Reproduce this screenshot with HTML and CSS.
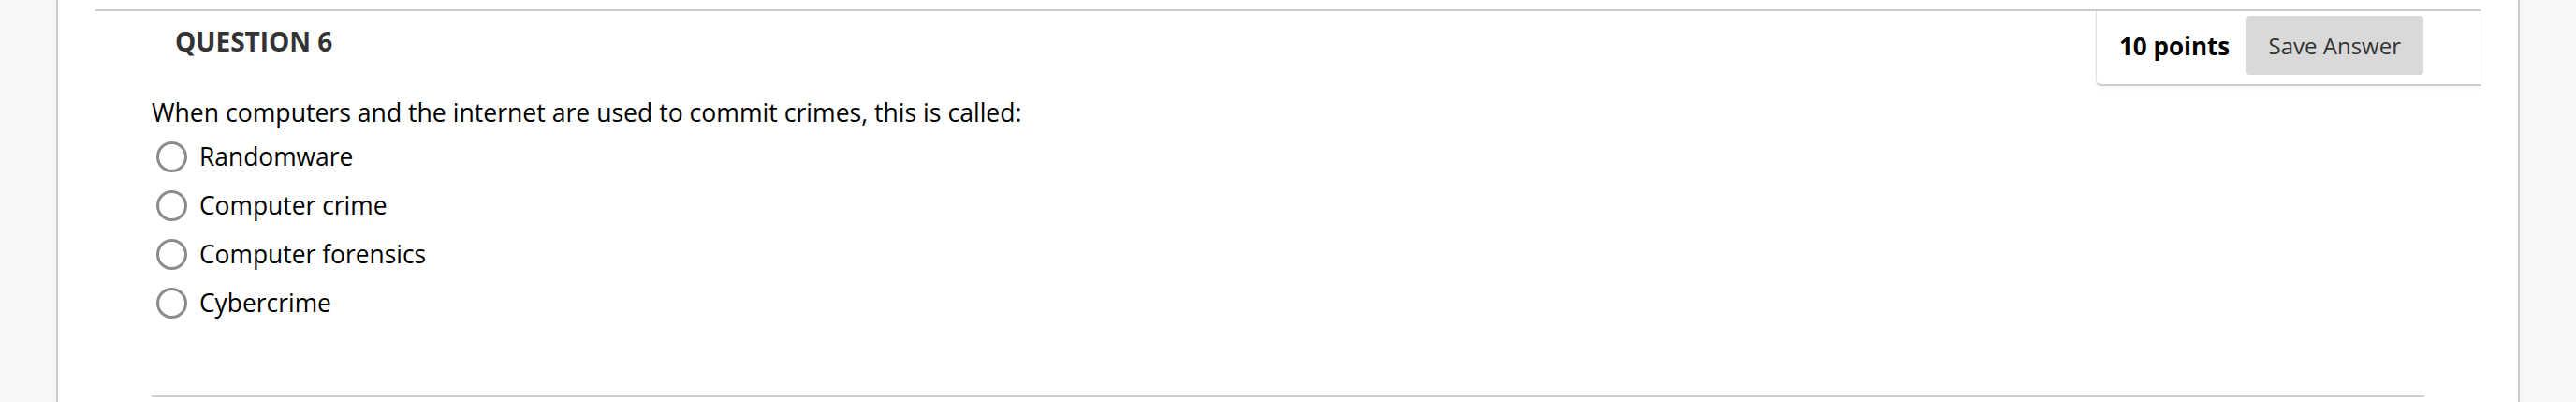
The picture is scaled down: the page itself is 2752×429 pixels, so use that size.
FILE: index.html
```html
<!DOCTYPE html>
<html lang="en">
<head>
  <meta charset="UTF-8">
  <title>Question 6</title>
  <link rel="stylesheet" href="styles.css">
</head>
<body>
  <div class="page">
    <div class="question">
      <div class="q-head">
        <h3 class="q-title">QUESTION 6</h3>
        <div class="points-box">
          <span class="points">10 points</span>
          <button class="save-btn" type="button">Save Answer</button>
        </div>
      </div>

      <div class="q-body">
        <p class="q-text">When computers and the internet are used to commit crimes, this is called:</p>
        <ul class="answers">
          <li class="answer"><span class="radio"></span><label>Randomware</label></li>
          <li class="answer"><span class="radio"></span><label>Computer crime</label></li>
          <li class="answer"><span class="radio"></span><label>Computer forensics</label></li>
          <li class="answer"><span class="radio"></span><label>Cybercrime</label></li>
        </ul>
      </div>
    </div>
  </div>
</body>
</html>
```

FILE: styles.css
```css
body {
  margin: 0;
  padding: 0;
  background-color: #f7f7f7;
  font-family: 'Open Sans', 'Noto Sans', sans-serif;
  color: #000;
  overflow: hidden;
}

.page {
  margin: 0 60px;
  height: 100vh;
  padding: 10px 40px 0;
  background: #fff;
  border-left: 2px solid #cccccc;
  border-right: 2px solid #cccccc;
}

.question {
  border-top: 2px solid #cccccc;
}

.q-head {
  display: flex;
  align-items: flex-start;
}

.q-title {
  margin: 0;
  padding: 14px 0 0 85px;
  font-size: 28px;
  font-weight: 700;
  color: #333;
  line-height: 36px;
}

.points-box {
  margin-left: auto;
  width: 411px;
  height: 80px;
  box-sizing: border-box;
  display: flex;
  align-items: center;
  padding: 0 0 5px 24px;
  background: #fff;
  border-left: 1px solid #e2e2e2;
  border-bottom: 2px solid #cccccc;
  border-bottom-left-radius: 6px;
  box-shadow: 0 1px 5px rgba(0, 0, 0, 0.06);
}

.points {
  font-size: 26px;
  font-weight: 700;
  color: #000;
  margin-right: 17px;
}

.save-btn {
  width: 190px;
  height: 63px;
  border: 0;
  border-radius: 4px;
  background: #d9d9d9;
  color: #333;
  font-family: inherit;
  font-size: 24px;
}

.q-body {
  margin: 10px 60px 0;
  padding-bottom: 73px;
  border-bottom: 2px solid #cccccc;
}

.q-text {
  margin: 0 0 3px;
  font-size: 26.6px;
  line-height: 36px;
}

.answers {
  list-style: none;
  margin: 0;
  padding: 0;
}

.answer {
  display: flex;
  align-items: center;
  height: 52px;
  padding-left: 5px;
  font-size: 26.4px;
}

.radio {
  width: 33px;
  height: 33px;
  box-sizing: border-box;
  border: 3px solid #8c8c8c;
  border-radius: 50%;
  margin-right: 13px;
}
```
